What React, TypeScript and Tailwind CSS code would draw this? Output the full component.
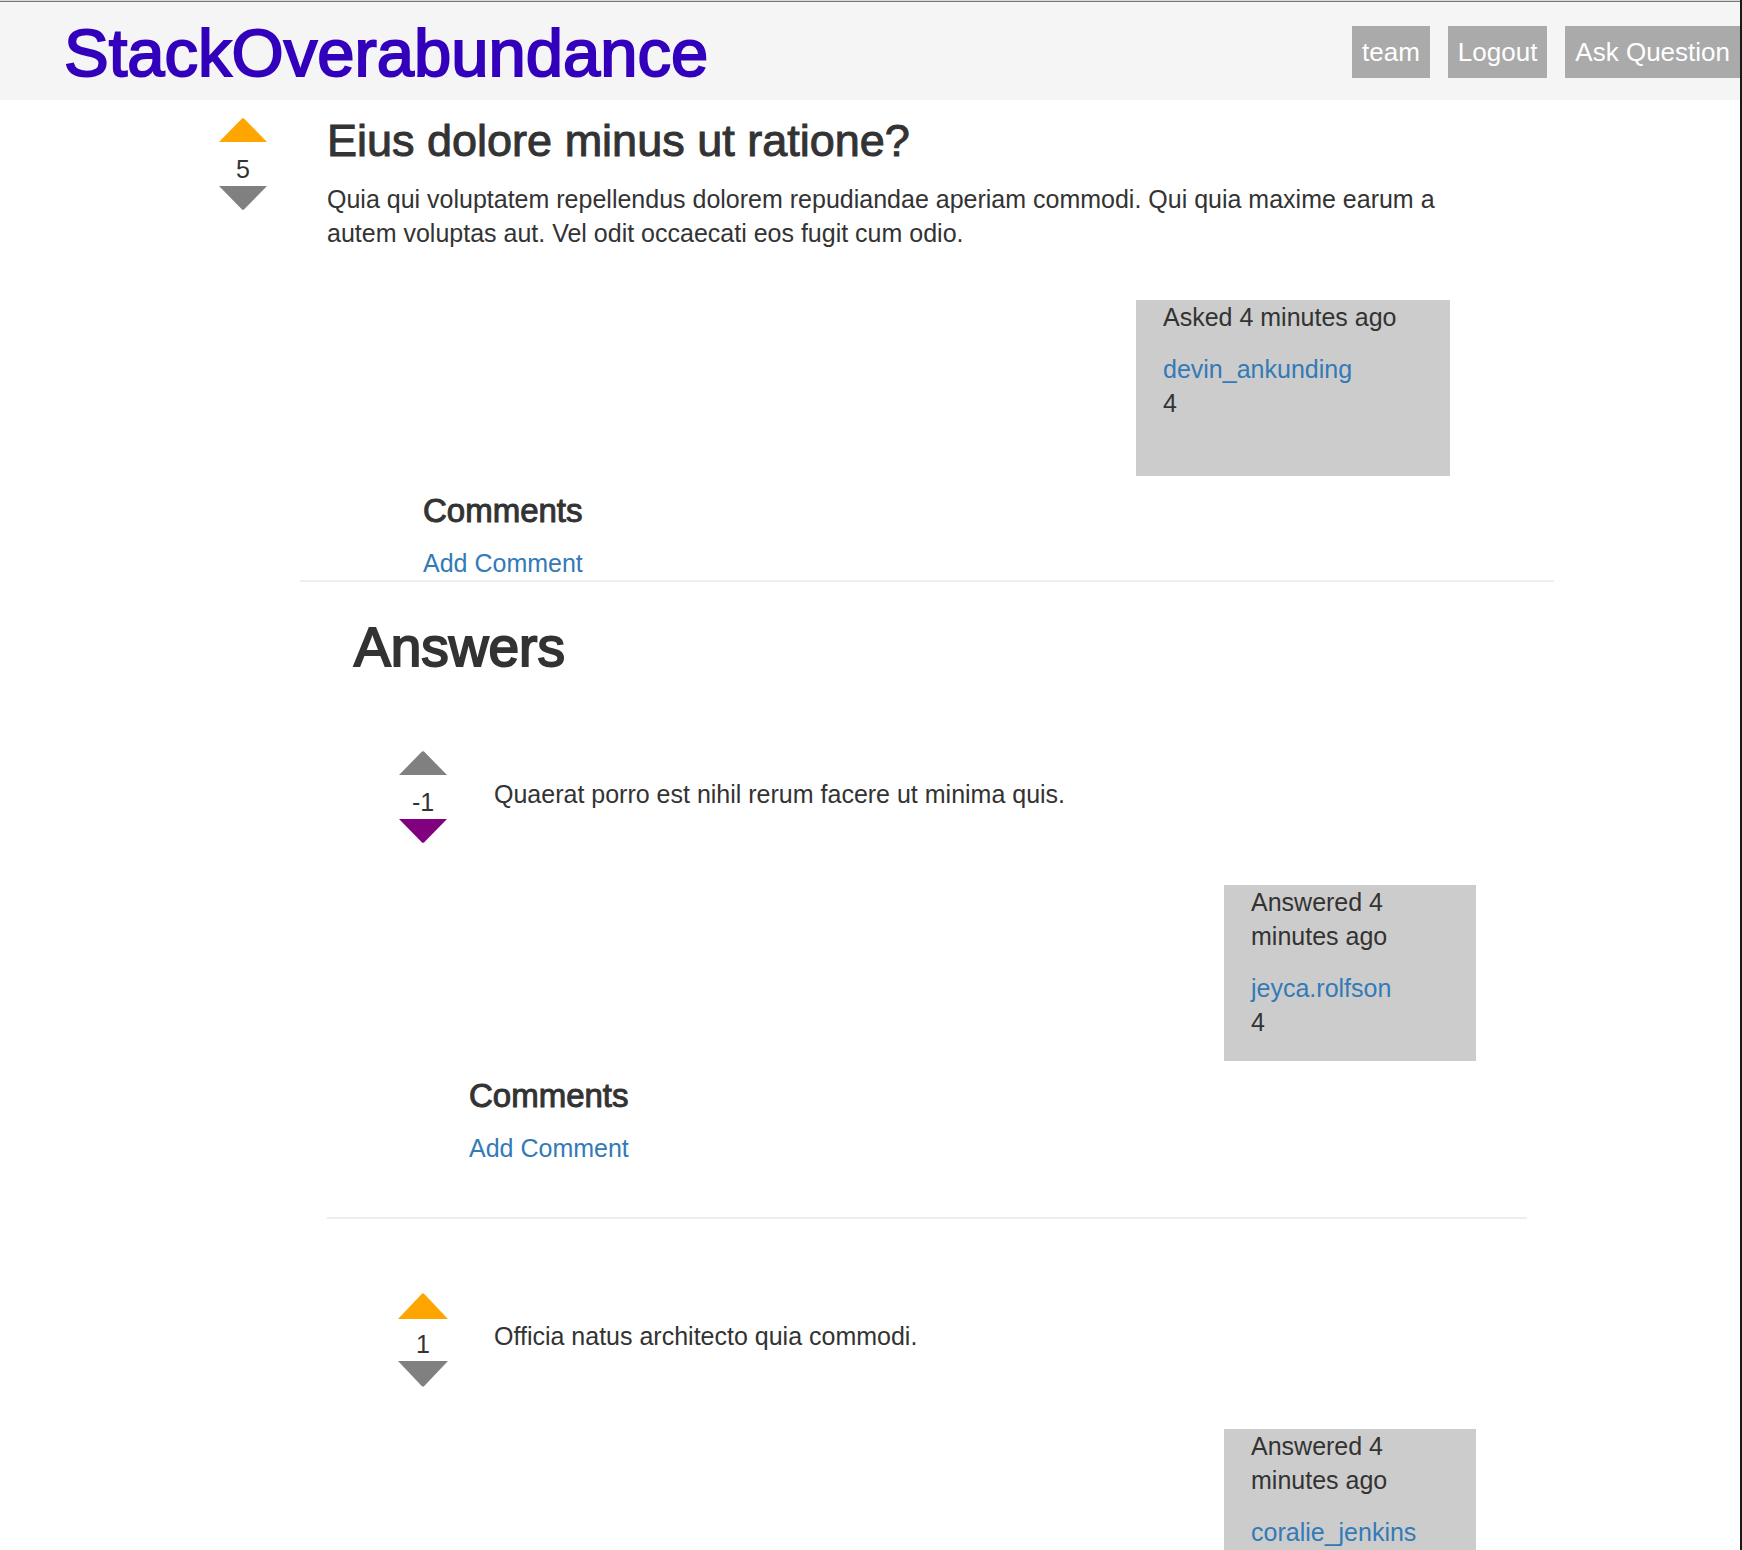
type VoteProps = {
  score: number;
  up: string;
  down: string;
  large?: boolean;
};

function Vote({ score, up, down, large = false }: VoteProps) {
  const arrow = large ? "block h-[26px] w-[50px]" : "block h-6 w-12";
  const gap = large ? "pt-2" : "pt-2.5";
  return (
    <div className="flex w-12 shrink-0 flex-col items-center">
      <button type="button" aria-label="Vote up">
        <svg viewBox="0 0 48 24" preserveAspectRatio="none" className={`${arrow} ${up}`} fill="currentColor">
          <path d="M0 24L23 0.6Q24 0 25 0.6L48 24Z" />
        </svg>
      </button>
      <span className={gap}>{score}</span>
      <button type="button" aria-label="Vote down">
        <svg viewBox="0 0 48 24" preserveAspectRatio="none" className={`${arrow} ${down}`} fill="currentColor">
          <path d="M0 0L23 23.4Q24 24 25 23.4L48 0Z" />
        </svg>
      </button>
    </div>
  );
}

type UserCardProps = {
  when: string;
  name: string;
  score?: number;
  className: string;
};

function UserCard({ when, name, score, className }: UserCardProps) {
  return (
    <div className={`ml-auto h-44 bg-[#ccc] pl-[27px] ${className}`}>
      <p className="mb-[18px]">{when}</p>
      <a href="#user" className="block text-[#337ab7]">{name}</a>
      {score !== undefined && <p>{score}</p>}
    </div>
  );
}

function Comments({ className }: { className: string }) {
  return (
    <section className={className}>
      <h4 className="mb-[18px] text-[33px] leading-[34px] [-webkit-text-stroke:1px]">Comments</h4>
      <a href="#comment" className="block w-fit text-[#337ab7]">Add Comment</a>
    </section>
  );
}

const navItem = "bg-[#aaa] px-2.5 py-[9px] text-[26px] text-white";

export default function App() {
  return (
    <div className="flex h-screen overflow-hidden bg-white font-['Liberation_Sans',Arial,sans-serif] text-[25px] leading-[34px] text-[#333]">
      <div className="min-w-0 flex-1">
        <div className="h-px bg-[#d9d9d9]" />
        <header className="flex h-[99px] items-start justify-between border-t border-[#777] bg-[#f5f5f5]">
          <h1 className="pt-3 pl-16 text-[67px] leading-[78px] text-[#30b] [-webkit-text-stroke:2px]">
            <a href="#home">StackOverabundance</a>
          </h1>
          <nav className="flex gap-[18px] pt-6">
            <a href="#team" className={navItem}>team</a>
            <button type="button" className={navItem}>Logout</button>
            <a href="#ask" className={navItem}>Ask Question</a>
          </nav>
        </header>

        <main>
          <article className="flex pt-[18px] pr-[280px] pl-[219px]">
            <Vote score={5} up="text-[orange]" down="text-[gray]" />
            <div className="min-w-0 flex-1 pl-[60px]">
              <h2 className="mb-[18px] text-[45px] leading-[46px] [-webkit-text-stroke:1px]">Eius dolore minus ut ratione?</h2>
              <p className="mb-[50px]">
                Quia qui voluptatem repellendus dolorem repudiandae aperiam commodi. Qui quia maxime earum a autem
                voluptas aut. Vel odit occaecati eos fugit cum odio.
              </p>
              <UserCard when="Asked 4 minutes ago" name="devin_ankunding" score={4} className="mr-2.5 w-[314px]" />
              <Comments className="pt-[18px] pl-24" />
            </div>
          </article>

          <section className="pr-[186px] pl-[300px]">
            <hr className="border-t-2 border-[#eee]" />
            <h2 className="pt-[35px] pl-[54px] text-[55px] leading-[60px] [-webkit-text-stroke:2px]">Answers</h2>
            <div className="px-[27px]">
              <article className="pt-[74px]">
                <div className="flex items-start pl-[72px]">
                  <Vote score={-1} up="text-[gray]" down="text-[purple]" />
                  <p className="pt-[26px] pl-[47px]">Quaerat porro est nihil rerum facere ut minima quis.</p>
                </div>
                <div className="pt-[42px]">
                  <UserCard when="Answered 4 minutes ago" name="jeyca.rolfson" score={4} className="mr-[51px] w-[252px] pr-10" />
                </div>
                <Comments className="pt-[18px] pb-[52px] pl-[142px]" />
                <hr className="border-t-2 border-[#eee]" />
              </article>
              <article className="pt-[74px]">
                <div className="flex items-start pl-[72px]">
                  <Vote score={1} up="text-[orange]" down="text-[gray]" large />
                  <p className="pt-[26px] pl-[47px]">Officia natus architecto quia commodi.</p>
                </div>
                <div className="pt-[42px]">
                  <UserCard when="Answered 4 minutes ago" name="coralie_jenkins" className="mr-[51px] w-[252px] pr-10" />
                </div>
              </article>
            </div>
          </section>
        </main>
      </div>
      <div className="w-0.5 shrink-0 bg-[#181914]" />
    </div>
  );
}
